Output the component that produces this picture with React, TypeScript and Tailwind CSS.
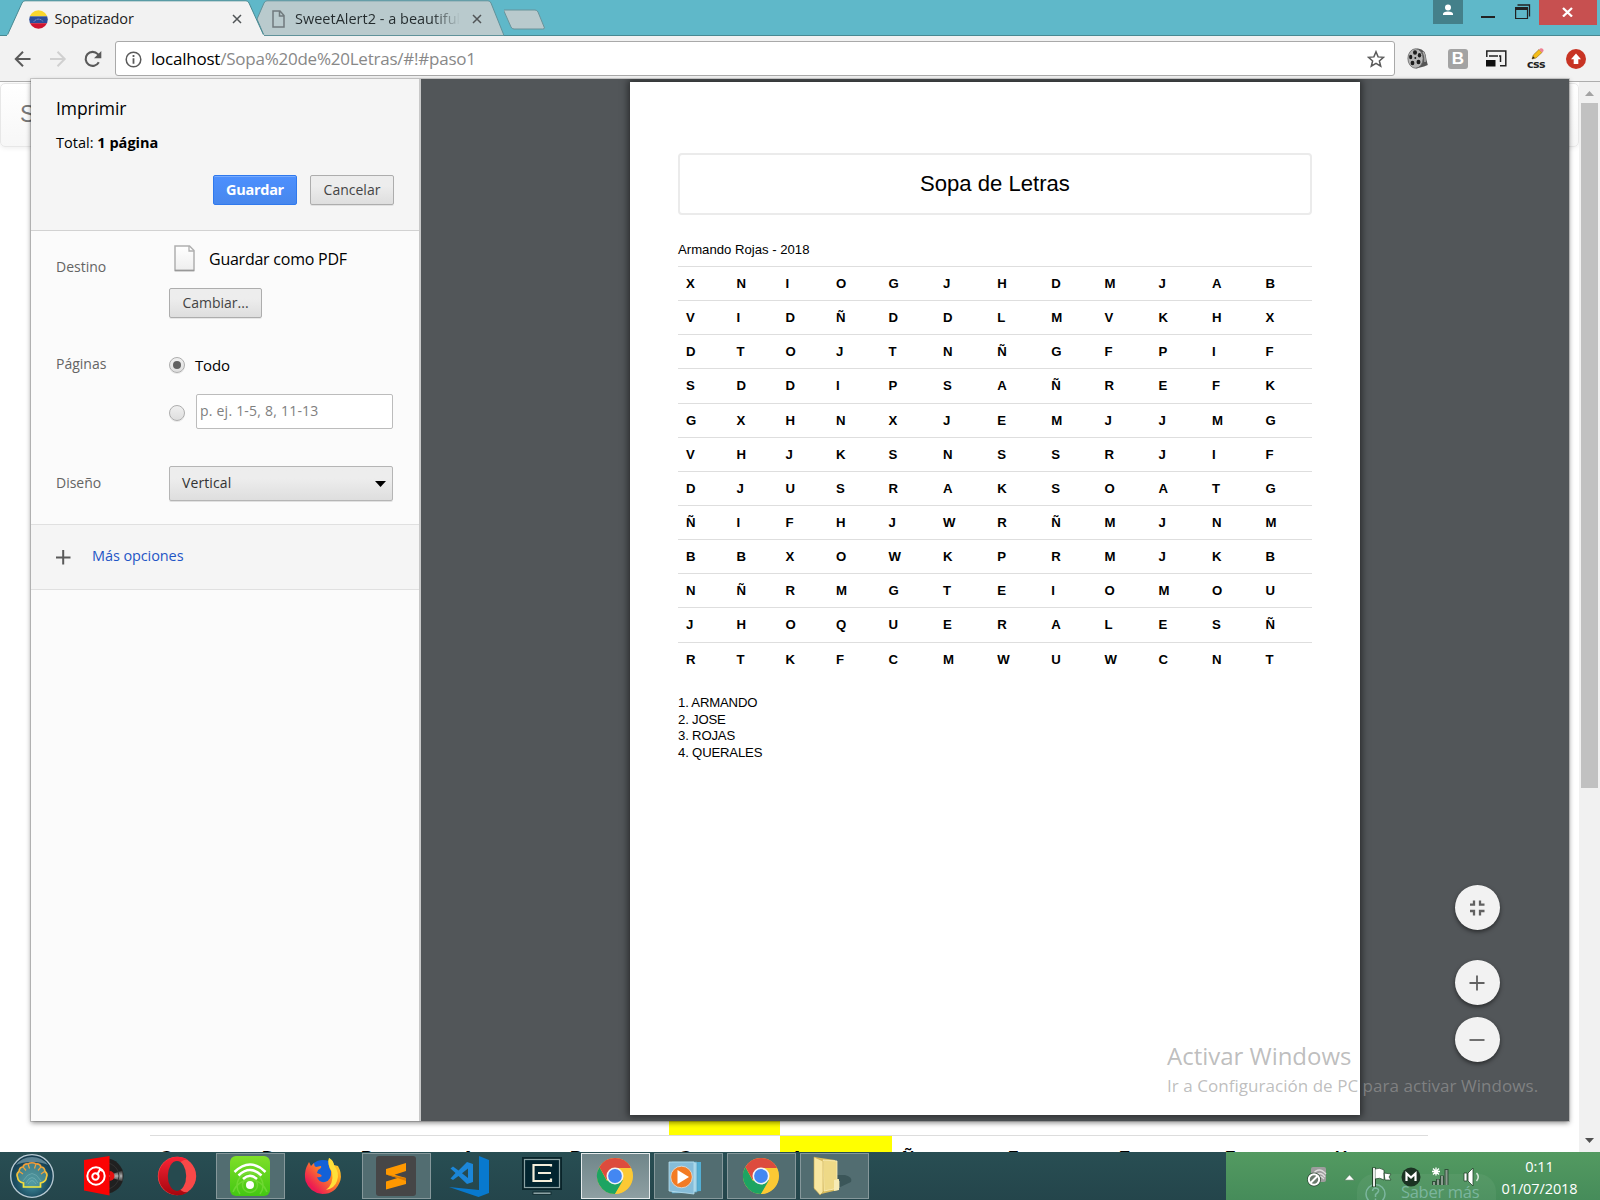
import type { ReactNode } from 'react';

const UI = 'font-["Open_Sans",sans-serif]';

const GRID = [
  'XNIOGJHDMJAB',
  'VIDÑDDLMVKHX',
  'DTOJTNÑGFPIF',
  'SDDIPSAÑREFK',
  'GXHNXJEMJJMG',
  'VHJKSNSSRJIF',
  'DJUSRAKSOATG',
  'ÑIFHJWRÑMJNM',
  'BBXOWKPRMJKB',
  'NÑRMGTEIOMOU',
  'JHOQUERALESÑ',
  'RTKFCMWUWCNT',
];

const WORDS = ['ARMANDO', 'JOSE', 'ROJAS', 'QUERALES'];

function CloseGlyph() {
  return (
    <svg width="10" height="10" viewBox="0 0 10 10" className="block shrink-0">
      <path d="M1 1L9 9M9 1L1 9" stroke="#505456" strokeWidth="1.5" />
    </svg>
  );
}

function TabStrip() {
  return (
    <div className="flex h-9 shrink-0 items-start border-b border-[#488992] bg-[#5fb8c9]">
      <div className="relative z-10 ml-[7px] flex h-9 w-[257px] items-center">
        <svg className="absolute inset-0" width="257" height="36" viewBox="0 0 257 36">
          <path d="M0 36L15 3Q16 .8 18 .8H239Q241 .8 242 3L257 36Z" fill="#f2f2f2" stroke="#488992" strokeWidth="1" />
          <path d="M0 35.5H257" stroke="#f2f2f2" strokeWidth="1.5" />
        </svg>
        <svg className="relative ml-[21.500px] mt-0.5" width="19" height="19" viewBox="0 0 18 18">
          <clipPath id="flag"><circle cx="9" cy="9" r="8.8" /></clipPath>
          <g clipPath="url(#flag)">
            <rect width="18" height="6" fill="#f9d62d" />
            <rect y="6" width="18" height="6.5" fill="#2c4c9b" />
            <rect y="12.5" width="18" height="6" fill="#cf1430" />
            <path d="M4.5 11Q9 6.3 13.500 11" fill="none" stroke="#aebfe4" strokeWidth=".8" strokeDasharray="1 .7" />
          </g>
        </svg>
        <span className={`${UI} relative ml-[7px] w-[177px] pt-0.5 text-[14.500px] leading-9 tracking-[-0.15px] text-[#1c1c1c]`}>Sopatizador</span>
        <div className="relative mt-0.5"><CloseGlyph /></div>
      </div>
      <div className="relative -ml-[7px] flex h-9 w-[247px] items-center">
        <svg className="absolute inset-0" width="247" height="36" viewBox="0 0 247 36">
          <path d="M0 19L7 3Q8 .8 10 .8H231Q233 .8 234 3L247 35.500H7Z" fill="#b9cacd" stroke="#60929a" strokeWidth="1" />
        </svg>
        <svg className="relative ml-[15px] mt-0.5" width="13" height="18" viewBox="0 0 13 18">
          <path d="M1 1H8L12 5.500V17H1ZM7.500 1V6H12" fill="none" stroke="#707a7d" strokeWidth="1.5" />
        </svg>
        <span className={`${UI} relative ml-[10px] w-[165px] overflow-hidden whitespace-nowrap bg-linear-to-r from-[#232b2d] from-83% to-transparent bg-clip-text pt-0.5 text-[14.500px] leading-9 tracking-[0px] text-transparent`}>
          SweetAlert2 - a beautiful,
        </span>
        <div className="relative ml-3 mt-0.5"><CloseGlyph /></div>
      </div>
      <svg className="mt-[9px]" width="43" height="21" viewBox="0 0 43 21">
        <path d="M-.5 1H31Q33 1 34 3L40.500 19Q40.500 20 38.500 20H10Q8 20 7 18L-.5 1Z" fill="#b9cacd" stroke="#69939a" strokeWidth="1" />
      </svg>
      <div className="ml-auto flex items-start">
        <div className="flex h-6 w-[30px] justify-center bg-[#44808a]">
          <svg className="mt-1" width="12" height="12" viewBox="0 0 12 12" fill="#fff">
            <circle cx="6" cy="3.500" r="3" />
            <path d="M1 11V10Q1 7.500 6 7.500Q11 7.500 11 10V11Z" />
          </svg>
        </div>
        <div className="ml-[18px] mt-4 h-0.5 w-3.5 bg-[#222]" />
        <svg className="ml-5 mt-1" width="16" height="16" viewBox="0 0 16 16" fill="none" stroke="#222">
          <path d="M2.500 1H14.500V12.500" strokeWidth="1.3" />
          <path d="M.6 4.500H12.500V14.500H.6Z" strokeWidth="1.2" />
          <path d="M0 4.500H13" strokeWidth="3" />
        </svg>
        <div className="ml-2 mr-[3px] flex h-[25px] w-[58px] items-center justify-center bg-[#c75050]">
          <svg className="-mt-0.5 mr-0.5" width="11" height="10" viewBox="0 0 11 10">
            <path d="M1 1L10 9.500M10 1L1 9.500" stroke="#fff" strokeWidth="2.300" />
          </svg>
        </div>
      </div>
    </div>
  );
}

function Toolbar() {
  return (
    <div className="flex h-[46px] shrink-0 items-center border-b border-[#adadad] bg-[#f2f2f2]">
      <svg className="ml-3.5" width="18" height="18" viewBox="0 0 18 18" fill="none" stroke="#5a5a5a" strokeWidth="2">
        <path d="M16.500 9H2.500M9 1.800L1.800 9L9 16.200" />
      </svg>
      <svg className="ml-[17px]" width="18" height="18" viewBox="0 0 18 18" fill="none" stroke="#d0d0d0" strokeWidth="2">
        <path d="M1 9H15M8.500 1.800L15.700 9L8.500 16.200" />
      </svg>
      <svg className="ml-[17px]" width="18" height="18" viewBox="0 0 18 18">
        <path d="M14.800 12.200A7 7 0 1 1 13.800 4.100L15.500 6" fill="none" stroke="#5a5a5a" strokeWidth="2.100" />
        <path d="M17.300 1V8.200H10Z" fill="#5a5a5a" />
      </svg>
      <div className="ml-[13px] flex h-[35px] w-[1280px] items-center rounded-[3px] border border-[#a9a9a9] bg-white">
        <svg className="ml-[9px] mt-0.5" width="17" height="17" viewBox="0 0 17 17">
          <circle cx="8.500" cy="8.500" r="7.300" fill="none" stroke="#5a5a5a" strokeWidth="1.500" />
          <path d="M8.500 4V5.900M8.500 7.300V12.800" stroke="#5a5a5a" strokeWidth="1.800" />
        </svg>
        <span className={`${UI} ml-[9px] whitespace-nowrap text-[17px] leading-8 tracking-[-0.23px] text-[#888]`}>
          <span className="text-black">localhost</span>/Sopa%20de%20Letras/#!#paso1
        </span>
        <svg className="ml-auto mr-[9px]" width="18" height="18" viewBox="0 0 18 18">
          <path d="M9 1.800L11.100 6.900L16.500 7.300L12.400 10.900L13.700 16.200L9 13.300L4.300 16.200L5.600 10.900L1.500 7.300L6.900 6.900Z" fill="none" stroke="#5a5a5a" strokeWidth="1.500" />
        </svg>
      </div>
      <svg className="ml-3" width="21" height="21" viewBox="0 0 21 21">
        <path d="M11 .5Q19 1 19.500 12L20.800 17L17 18.500L9 20.500L8 1Z" fill="#555" />
        <path d="M16 4Q18.500 8 18 14" fill="none" stroke="#aaa" strokeWidth="1.500" />
        <ellipse cx="8.500" cy="10.500" rx="7.600" ry="9.700" fill="#b5b5b5" stroke="#666" strokeWidth=".8" />
        <g fill="#1d1d1d">
          <ellipse cx="8" cy="4.500" rx="2" ry="2.300" /><ellipse cx="3.700" cy="9" rx="1.600" ry="2.300" />
          <ellipse cx="12.500" cy="7.200" rx="1.700" ry="2.200" /><ellipse cx="5.500" cy="15" rx="1.900" ry="2.200" />
          <ellipse cx="11.500" cy="14" rx="2" ry="2.300" /><circle cx="8.300" cy="10" r="1" />
        </g>
      </svg>
      <div className='ml-5 flex h-5 w-5 items-center justify-center rounded-[3px] bg-[#a3a3a3] font-["Liberation_Sans",sans-serif] text-[17px] font-bold leading-5 text-white'>B</div>
      <svg className="ml-[18px]" width="21" height="17" viewBox="0 0 21 17" fill="none" stroke="#222">
        <path d="M.8 7V1H19.800V15.800H14" strokeWidth="1.500" />
        <path d="M3 6H14.500V12" strokeWidth="1.500" strokeDasharray="9 1" />
        <rect y="10" width="9.500" height="6.500" fill="#111" stroke="none" />
      </svg>
      <div className="ml-[17px] flex w-6 flex-col items-center">
        <svg className="ml-1" width="14" height="12" viewBox="0 0 14 12">
          <path d="M1 11L2.300 7L8 1.500L11 4.500L5 10Z" fill="#f5bd17" stroke="#8d6a1c" strokeWidth=".6" />
          <path d="M1 11L2 8.300L3.800 10Z" fill="#222" />
          <path d="M8 1.500Q10 -.5 12 1Q13.500 3 11 4.500Z" fill="#ef8194" />
        </svg>
        <span className="font-['DejaVu_Sans',sans-serif] text-[11px] font-bold leading-[9px] tracking-[-0.5px] text-[#222]">css</span>
      </div>
      <svg className="ml-[17px]" width="22" height="22" viewBox="0 0 22 22">
        <circle cx="11" cy="11" r="10" fill="#c83424" />
        <path d="M11 5.500L16 11.200H13.300V16H8.700V11.200H6Z" fill="#fff" />
      </svg>
    </div>
  );
}

function GreyButton({ children, className }: { children: ReactNode; className: string }) {
  return (
    <div className={`${className} flex h-[30px] items-center justify-center rounded-[2px] border border-[#adadad] bg-linear-to-b from-[#ededed] from-35% to-[#dedede] text-[14px] leading-7 text-[#444] shadow-[0_1px_0_rgba(0,0,0,0.08)]`}>
      {children}
    </div>
  );
}

function Radio({ on }: { on?: boolean }) {
  return (
    <div className="flex h-4 w-4 shrink-0 items-center justify-center rounded-full border border-[#adadad] bg-linear-to-b from-[#f0f0f0] to-[#dedede] shadow-[0_1px_0_rgba(0,0,0,0.08)]">
      {on && <div className="h-2 w-2 rounded-full bg-[#606060]" />}
    </div>
  );
}

function PrintSidebar() {
  return (
    <div className={`${UI} flex w-[390px] shrink-0 flex-col border-r-2 border-[#c8c8c8] bg-[#fbfbfb] text-[14px] leading-5`}>
      <div className="h-[152px] border-b border-[#d2d2d2] bg-[#f5f5f5] pl-[25px] pr-[25px] pt-[17px]">
        <div className="text-[17.500px] leading-6 tracking-[-0.1px]">Imprimir</div>
        <div className="mt-[13px] text-[14.500px] leading-5 tracking-[0.02px]">Total: <b>1 página</b></div>
        <div className="mt-[22px] flex justify-end gap-[13px]">
          <div className="flex h-[30px] w-[84px] items-center justify-center rounded-[2px] border border-[#3079ed] bg-linear-to-b from-[#4d90fe] to-[#4787ed] text-[14.500px] font-bold tracking-[-0.3px] text-white shadow-[inset_0_1px_0_rgba(255,255,255,0.25)]">Guardar</div>
          <GreyButton className="w-[84px]">Cancelar</GreyButton>
        </div>
      </div>
      <div className="flex h-[293px] flex-col pl-[25px] pr-[26px]">
        <div className="flex h-[87px]">
          <div className="w-[113px] pt-[26px] text-[#646464]">Destino</div>
          <div>
            <div className="flex items-center pl-[5px] pt-[14px]">
              <svg width="21" height="27" viewBox="0 0 21 27">
                <defs><linearGradient id="doc" x1="0" y1="0" x2="0" y2="1"><stop offset="0" stopColor="#fff" /><stop offset="1" stopColor="#eee" /></linearGradient></defs>
                <path d="M1 1H15.500L20 5.500V25.500H1Z" fill="url(#doc)" stroke="#b0b0b0" strokeWidth="1.500" />
                <path d="M15 1V6H20" fill="none" stroke="#b0b0b0" strokeWidth="1.300" />
                <path d="M1 25.500H20" stroke="#999" strokeWidth="1.500" />
              </svg>
              <span className="ml-[14px] whitespace-nowrap text-[16px] tracking-[-0.24px]">Guardar como PDF</span>
            </div>
            <GreyButton className="mt-4 w-[93px]">Cambiar...</GreyButton>
          </div>
        </div>
        <div className="mt-9 flex">
          <div className="w-[113px] text-[#646464]">Páginas</div>
          <div className="flex flex-col">
            <div className="flex items-center gap-2.5 pt-px text-[15px] tracking-[-0.15px]"><Radio on />Todo</div>
            <div className="mt-[19px] flex items-center gap-[11px]">
              <div className="mt-0.5"><Radio /></div>
              <div className="h-[35px] w-[197px] rounded-[2px] border border-[#bcbcbc] bg-white pl-[3px] text-[14px] leading-[32px] tracking-[0.22px] text-[#808080]">p. ej. 1-5, 8, 11-13</div>
            </div>
          </div>
        </div>
        <div className="mt-[37px] flex">
          <div className="w-[113px] pt-[7px] text-[#646464]">Diseño</div>
          <div className="flex h-[35px] w-[224px] items-center justify-between rounded-[2px] border border-[#b5b5b5] bg-linear-to-b from-[#ededed] from-35% to-[#dedede] pb-0.5 pl-3 pr-1.5 tracking-[0.1px] text-[#333] shadow-[0_1px_0_rgba(0,0,0,0.1)]">
            Vertical
            <svg className="mt-0.5" width="11" height="6" viewBox="0 0 11 6"><path d="M0 0H11L5.500 6Z" /></svg>
          </div>
        </div>
      </div>
      <div className="flex h-[66px] items-center border-y border-[#e0e0e0] bg-[#f5f5f5] pl-[25px]">
        <svg width="15" height="15" viewBox="0 0 15 15"><path d="M0 7.500H14.500M7.200 0V14.500" stroke="#5a5a5a" strokeWidth="2" /></svg>
        <span className="-mt-0.5 ml-[21px] text-[14.500px] tracking-[-0.1px] text-[#1f55c6]">Más opciones</span>
      </div>
    </div>
  );
}

function ZoomButton({ d, thick, className }: { d: string; thick?: boolean; className: string }) {
  return (
    <div className={`${className} flex h-[45px] w-[45px] items-center justify-center rounded-full bg-[#f2f2f2] shadow-[0_2px_4px_rgba(0,0,0,0.5)]`}>
      <svg className="mr-px" width="16" height="16" viewBox="0 0 16 16"><path d={d} fill="none" stroke="#616161" strokeWidth={thick ? 2.3 : 1.8} /></svg>
    </div>
  );
}

function Preview() {
  return (
    <div className="relative flex-1 overflow-hidden bg-[#525659]">
      <div className='ml-[209px] mt-[3px] h-[1033px] w-[730px] bg-white px-12 pt-[71px] font-["Liberation_Sans",sans-serif] text-black shadow-[0_0_7px_2px_rgba(0,0,0,0.5)]'>
        <div className="flex h-[62px] items-center justify-center rounded-[4px] border-2 border-[#ebebeb] text-[22.100px]">Sopa de Letras</div>
        <div className="mt-[25px] h-[26px] text-[13.150px] leading-5">Armando Rojas - 2018</div>
        <div>
          {GRID.map((row) => (
            <div key={row} className="grid h-[34.150px] grid-cols-[50.500px_49px_50.500px_52.500px_54.500px_54.300px_54px_53.200px_54px_53.500px_53.500px_53px] border-t border-[#dedede] pl-2 text-[13.200px] font-bold leading-[34px]">
              {[...row].map((c, i) => <span key={i}>{c}</span>)}
            </div>
          ))}
        </div>
        <div className="mt-[19.500px] text-[13.150px] leading-[16.600px] tracking-[-0.18px]">
          {WORDS.map((w, i) => <div key={w}>{i + 1}. {w}</div>)}
        </div>
      </div>
      <div className="absolute right-[69px] top-[806px] flex flex-col">
        <ZoomButton className="" thick d="M1 4.700H5V.5M15.500 4.700H11V.5M1 11H5V15.500M15.500 11H11V15.500" />
        <ZoomButton className="mt-[30px]" d="M.5 8H15.500M8 .5V15.500" />
        <ZoomButton className="mt-3" d="M.5 8H15.500" />
      </div>
    </div>
  );
}

function PageBehind() {
  const tops = [...'CDPABGAÑFEFU'];
  return (
    <div className="flex h-full">
      <div className="flex flex-1 flex-col overflow-hidden">
        <div className='mt-px h-[64px] shrink-0 rounded-[5px] border border-[#e7e7e7] bg-linear-to-b from-white to-[#f7f7f7] pl-[19px] font-["Liberation_Sans",sans-serif] text-[23px] leading-[61px] text-[#777] shadow-[0_1px_5px_rgba(0,0,0,0.075)]'>S</div>
        <div className="mt-[974px] flex h-[14px] shrink-0 pl-[669px]"><div className="w-[111px] bg-[#ff0]" /></div>
        <div className='ml-[150px] grid h-[60px] w-[1278px] shrink-0 grid-cols-[102px_99px_101px_108px_109px_111px_112px_106px_111px_106px_110px_103px] border-t border-[#ddd] font-["Liberation_Sans",sans-serif] text-[17px] font-bold leading-[44px]'>
          {tops.map((c, i) => <span key={i} className={i === 6 ? 'bg-[#ff0] pl-[11px]' : 'pl-[10px]'}>{c}</span>)}
        </div>
      </div>
      <div className="flex w-[21px] flex-col items-center bg-[#f1f1f1]">
        <svg className="mt-[9px] shrink-0" width="9" height="5" viewBox="0 0 9 5"><path d="M0 5L4.500 0L9 5Z" fill="#a3a3a3" /></svg>
        <div className="mt-[7px] h-[685px] w-[17px] bg-[#c1c1c1]" />
        <svg className="mb-[9px] mt-auto shrink-0" width="9" height="5" viewBox="0 0 9 5"><path d="M0 0L4.500 5L9 0Z" fill="#505050" /></svg>
      </div>
    </div>
  );
}

function Chrome() {
  return (
    <svg width="38" height="38" viewBox="0 0 38 38">
      <circle cx="19" cy="19" r="18" fill="#fcc934" />
      <path d="M19 19L27.700 24L19 37A18 18 0 0 1 3.400 10L11 24Z" fill="#1da462" />
      <path d="M3.400 10A18 18 0 0 1 34.600 10L34.800 11H19L10.500 22.500Z" fill="#dd4b3e" />
      <path d="M34.800 11A18 18 0 0 1 19 37L27 23L27 11Z" fill="#fcc934" />
      <circle cx="19" cy="19" r="8.500" fill="#f4f4f4" />
      <circle cx="19" cy="19" r="6.900" fill="#4387f2" />
    </svg>
  );
}

function Slot({ children, state }: { children: ReactNode; state?: 'open' | 'active' }) {
  const look =
    state === 'active'
      ? 'border-[#e6ebec] bg-linear-to-b from-[#70868a] to-[#8e9fa2]'
      : state === 'open'
        ? 'border-[#86989b] bg-[#526d71]'
        : 'border-transparent';
  return <div className={`${look} flex h-[46px] w-[69px] shrink-0 items-center justify-center border pr-0.5`}>{children}</div>;
}

function Taskbar() {
  return (
    <div className="relative flex h-12 shrink-0 bg-linear-to-b from-[#284e53] to-[#24454b]">
      <div className="flex items-start gap-1 pt-px">
        <div className="w-[66px] pl-[9px]">
          <svg width="46" height="46" viewBox="0 0 46 46">
            <defs>
              <radialGradient id="orb" cx=".5" cy=".65" r=".6"><stop offset="0" stopColor="#4494a5" /><stop offset=".6" stopColor="#1d5064" /><stop offset="1" stopColor="#163c4e" /></radialGradient>
              <linearGradient id="shell" x1="0" y1="0" x2="0" y2="1"><stop offset="0" stopColor="#ef9738" /><stop offset="1" stopColor="#f5ea3d" /></linearGradient>
            </defs>
            <circle cx="23" cy="23" r="21.300" fill="url(#orb)" stroke="#b9cbd4" strokeWidth="1.300" />
            <path d="M7 12Q13 4 23 4Q33 4 39 12Q33 9 23 9Q13 9 7 12Z" fill="#7ba0ae" opacity=".7" />
            <path d="M14.500 34V30Q9 29 8.500 24Q7 21 10 18.500Q10.500 14 14 14Q15 10.500 19 11Q23 8.500 27 11Q31 10.500 32 14Q35.500 14 36 18.500Q39 21 37.500 24Q37 29 31.500 30V34Z" fill="#5aa0a3" fillOpacity=".65" stroke="url(#shell)" strokeWidth="1.700" />
            <path d="M10.500 18.500L14 21M14.200 14.200L17 17.500M19.200 11.500L20.500 15.500M26.800 11.500L25.500 15.500M31.800 14.200L29 17.500M35.500 18.500L32 21" stroke="#efa33e" strokeWidth="1.200" />
            <path d="M17 30Q23 19 29 30M19 31Q23 24 27 31M14 28Q23 13 32 28" fill="none" stroke="#92c5c6" strokeWidth="1" opacity=".4" />
          </svg>
        </div>
        <Slot>
          <svg width="42" height="42" viewBox="0 0 42 42">
            <defs><linearGradient id="shine" x1="0" y1="0" x2="0" y2="1"><stop offset="0" stopColor="#2a2a2a" /><stop offset=".5" stopColor="#b0b0b0" /><stop offset="1" stopColor="#2a2a2a" /></linearGradient></defs>
            <circle cx="23" cy="21" r="17.500" fill="#202020" />
            <path d="M24 21L39.500 15.500V26.500Z" fill="url(#shine)" />
            <circle cx="23" cy="21" r="13" fill="none" stroke="#333" strokeWidth="1" />
            <path d="M1 5L26.500 1V40.500L1 35.500Z" fill="#fb0303" />
            <path d="M26.500 16A5 5 0 0 1 26.500 26Z" fill="#e51111" />
            <g fill="none" stroke="#fff"><circle cx="13" cy="21" r="8.700" strokeWidth="2" /><circle cx="12.500" cy="21.500" r="3.200" strokeWidth="2" /><path d="M14 20L17 14.500L19.500 16" strokeWidth="2" /></g>
          </svg>
        </Slot>
        <Slot>
          <svg width="40" height="40" viewBox="0 0 40 40">
            <defs><linearGradient id="op" x1="0" y1="0" x2="0" y2="1"><stop offset="0" stopColor="#fa2335" /><stop offset="1" stopColor="#a5060e" /></linearGradient></defs>
            <circle cx="20" cy="20" r="19.200" fill="#f94848" />
            <path d="M31 3.800A19.200 19.200 0 1 0 31 36.200C14 38 14 2 31 3.800Z" fill="url(#op)" />
            <ellipse cx="20" cy="20" rx="9.200" ry="15" fill="#264a4f" />
          </svg>
        </Slot>
        <Slot state="open">
          <svg width="40" height="40" viewBox="0 0 40 40">
            <defs><linearGradient id="wf" x1="0" y1="0" x2="0" y2="1"><stop offset="0" stopColor="#7fdf28" /><stop offset="1" stopColor="#43c713" /></linearGradient></defs>
            <rect width="40" height="40" rx="6" fill="url(#wf)" />
            <g fill="none" stroke="#88e24b" strokeWidth="1.500" opacity=".5"><circle cx="20" cy="29" r="7.500" /><path d="M10 38A13 13 0 1 1 30 38M3 36A18 18 0 0 1 37 36" /></g>
            <circle cx="20" cy="29" r="4" fill="#fff" />
            <path d="M4.500 16Q20 1 35.500 16M8.500 19.500Q20 8.500 31.500 19.500M13 23Q20 16.500 27 23" fill="none" stroke="#fff" strokeWidth="2.500" />
          </svg>
        </Slot>
        <Slot>
          <svg width="38" height="38" viewBox="0 0 38 38">
            <defs><linearGradient id="fx" x1="1" y1="0" x2=".2" y2=".8"><stop offset="0" stopColor="#fff22e" /><stop offset=".45" stopColor="#ff9420" /><stop offset="1" stopColor="#ed1b53" /></linearGradient></defs>
            <circle cx="19" cy="18" r="15" fill="#1261d8" />
            <path d="M2.500 10L5 5L7 9L10 6Q10 9 12 10L17 9Q18 11 14 13L13 16Q17 17 18 19Q15 21 13 20Q15 26 21 25Q28 23 27 14Q23 7 25 1Q29 3 30 8L34 9Q38 16 36.500 23Q32 37 18.500 37Q6 36 1.500 24Q0 16 2.500 10Z" fill="url(#fx)" />
            <path d="M25 1Q29 3 30 8Q36 16 33 24Q31 31 22 33Q30 27 28 15Q23 7 25 1Z" fill="#ffdf3a" />
          </svg>
        </Slot>
        <Slot state="open">
          <svg width="40" height="40" viewBox="0 0 40 40">
            <rect width="40" height="40" rx="3" fill="#464647" />
            <path d="M10 13L30 7V15L18.500 18.700L30 22V28L10 33.500V25.500L21.500 22L10 18.500Z" fill="#ff9800" />
            <path d="M10 18.500L30 22V25L21.500 22Z" fill="#d87a00" />
          </svg>
        </Slot>
        <Slot>
          <svg width="40" height="41" viewBox="0 0 40 41">
            <path d="M30 0L40 4V37L29.500 41L0 31L30 34Z" fill="#0879ce" />
            <path fillRule="evenodd" d="M18 6L24 8V26L18 28L9.500 20L4 24L1.500 22.500L6.500 17L1.500 12.500L4 10.500L9.500 14.500ZM19 12.500L13 17.200L19 22Z" fill="#1b86d8" />
          </svg>
        </Slot>
        <Slot>
          <svg width="40" height="38" viewBox="0 0 40 38">
            <rect x="1" y="1" width="38" height="31" fill="#001f29" stroke="#09242a" strokeWidth="2" />
            <rect x="2.500" y="2.500" width="35" height="28" fill="#01242f" stroke="#8ba2a4" strokeWidth="1.200" />
            <path d="M29 9.500V8H11.500V24H29V21.500M16 16H29" fill="none" stroke="#f4eeda" strokeWidth="2.200" />
            <rect x="11" y="35" width="18" height="2.500" fill="#8ba2a4" stroke="#09242a" strokeWidth=".8" />
          </svg>
        </Slot>
        <Slot state="active"><Chrome /></Slot>
        <Slot state="open">
          <svg className="-ml-1.5 mt-1" width="34" height="34" viewBox="0 0 34 34">
            <path d="M8 1H33V30L8 32Z" fill="#54afd4" />
            <path d="M4 1H29V31L4 32Z" fill="#a5d5e9" stroke="#4f9dbf" strokeWidth=".7" />
            <path d="M1 1H26V33L1 30Z" fill="#86bdd9" stroke="#b8deec" strokeWidth=".8" />
            <circle cx="13.500" cy="16" r="10.800" fill="#f37b24" stroke="#d8e6eb" strokeWidth=".8" />
            <path d="M9.500 9L21 16L9.500 23Z" fill="#fff" />
          </svg>
        </Slot>
        <Slot state="open"><Chrome /></Slot>
        <Slot state="open">
          <svg className="-ml-1" width="42" height="42" viewBox="0 0 42 42">
            <path d="M25 34L40 27Q42 22 34 20L26 20Z" fill="#243f42" opacity=".5" />
            <path d="M3 2L24 5V31L27 35L10 39L3 34Z" fill="#d9bc5c" />
            <path d="M12 5L26 6V24L28 26V33L13 36Z" fill="#eed987" stroke="#fbefbb" strokeWidth=".8" />
            <path d="M3 2L12 6V37L9 40L3 33Z" fill="#f9e7a0" stroke="#c7a84c" strokeWidth=".6" />
            <path d="M23 25L28 24V35L23 36Z" fill="#f7ebb4" />
          </svg>
        </Slot>
      </div>
      <div className="relative ml-auto flex w-[374px] overflow-hidden bg-linear-to-b from-[#539a61] to-[#468c5a]">
        <div className="absolute left-[131px] top-[22px] h-12 w-[139px] rounded-[18px] bg-white/5" />
        <div className={`${UI} absolute left-[139px] top-[28px] flex items-center text-[#8fc5b8]/70`}>
          <svg width="21" height="24" viewBox="0 0 21 24" fill="none" stroke="currentColor" strokeWidth="1.500">
            <circle cx="10.500" cy="14" r="9.500" /><path d="M7.500 11Q8 8 10.500 8Q14 8.500 13.500 11Q13 13 10.500 14.500V17M10.500 18.500V20.500" />
          </svg>
          <span className="ml-[15px] text-[16.500px] leading-6 tracking-[-0.3px]">Saber más</span>
        </div>
        <div className="relative flex h-12 items-center">
          <svg className="ml-[81px]" width="21" height="21" viewBox="0 0 21 21">
            <rect x="4" y="1" width="15" height="15" rx="2" fill="#9d9d9d" />
            <path d="M6 8Q12 0 19 8M8 11Q13 4 18 11M10 13Q13 8 17 13" fill="none" stroke="#ddd" strokeWidth="1.300" />
            <circle cx="7" cy="13.500" r="5.400" fill="#539362" stroke="#2b4632" strokeWidth="3" /><circle cx="7" cy="13.500" r="5.200" fill="#6a7a6d" stroke="#fff" strokeWidth="2" /><path d="M3.500 17L10.500 10" stroke="#fff" strokeWidth="2" />
          </svg>
          <svg className="ml-4 mt-0.5" width="11" height="7" viewBox="0 0 11 7"><path d="M.5 6.200L5.500.8L10.500 6.200Z" fill="#fff" stroke="#3b6a45" strokeWidth=".6" /></svg>
          <svg className="ml-[17px] mt-0.5" width="20" height="20" viewBox="0 0 20 20">
            <path d="M2 .5V20" stroke="#24442b" strokeWidth="4" /><path d="M3 2Q8 0 12 3V13Q8 10 3 12ZM12 6L19 7L17 10L19 13L13 13Z" fill="#fff" stroke="#24442b" strokeWidth=".7" /><path d="M2 1V19.500" stroke="#fff" strokeWidth="1.800" />
          </svg>
          <svg className="ml-[9px] mt-0.5" width="20" height="20" viewBox="0 0 20 20">
            <circle cx="10" cy="10" r="9.500" fill="#1b3323" /><path d="M5.500 14V6.500L10 10.500L14.500 6.500V14" fill="none" stroke="#fff" strokeWidth="2.200" />
          </svg>
          <svg className="ml-[10px] mt-0.5" width="18" height="20" viewBox="0 0 18 20">
            <path d="M3 14V18M7 12V18M11 8.500V18M15.500 2V18" stroke="#30503a" strokeWidth="4" /><path d="M3 15V18M7 12.500V18M11 9V18M15.500 3V18" stroke="#8c9c90" strokeWidth="2" />
            <path d="M5 .5V8.500M1 4.500H9M2 1.500L8 7.500M8 1.500L2 7.500" stroke="#fff" strokeWidth="1.300" />
          </svg>
          <svg className="ml-[14px] mt-0.5" width="18" height="20" viewBox="0 0 18 20">
            <path d="M1 6H4V14H1ZM5 6L10 1V19L5 14Z" fill="#fff" stroke="#24442b" strokeWidth=".8" /><path d="M13.500 6Q17 10 13.500 14" fill="none" stroke="#d5e6d8" strokeWidth="1.500" />
          </svg>
          <div className={`${UI} ml-[20px] flex w-[77px] flex-col items-center pt-1 text-[14.500px] leading-[22px] tracking-[-0.1px] text-white`}>
            <span>0:11</span>
            <span>01/07/2018</span>
          </div>
        </div>
      </div>
    </div>
  );
}

export default function App() {
  return (
    <div className="relative flex h-[1200px] w-[1600px] flex-col overflow-hidden bg-white">
      <TabStrip />
      <Toolbar />
      <div className="h-[1070px] shrink-0"><PageBehind /></div>
      <Taskbar />
      <div className="absolute left-[31px] top-[79px] flex h-[1042px] w-[1538px] bg-[#fbfbfb] shadow-[0_0_0_1px_rgba(0,0,0,0.14),0_2px_5px_rgba(0,0,0,0.45)]">
        <PrintSidebar />
        <Preview />
      </div>
      <div className={`${UI} pointer-events-none absolute left-[1167px] top-[1040px] whitespace-nowrap text-[#9a9a9a]/65`}>
        <div className="text-[24px] leading-8 tracking-[-0.02px]">Activar Windows</div>
        <div className="text-[17px] leading-[28px] tracking-[0.04px]">Ir a Configuración de PC para activar Windows.</div>
      </div>
    </div>
  );
}
